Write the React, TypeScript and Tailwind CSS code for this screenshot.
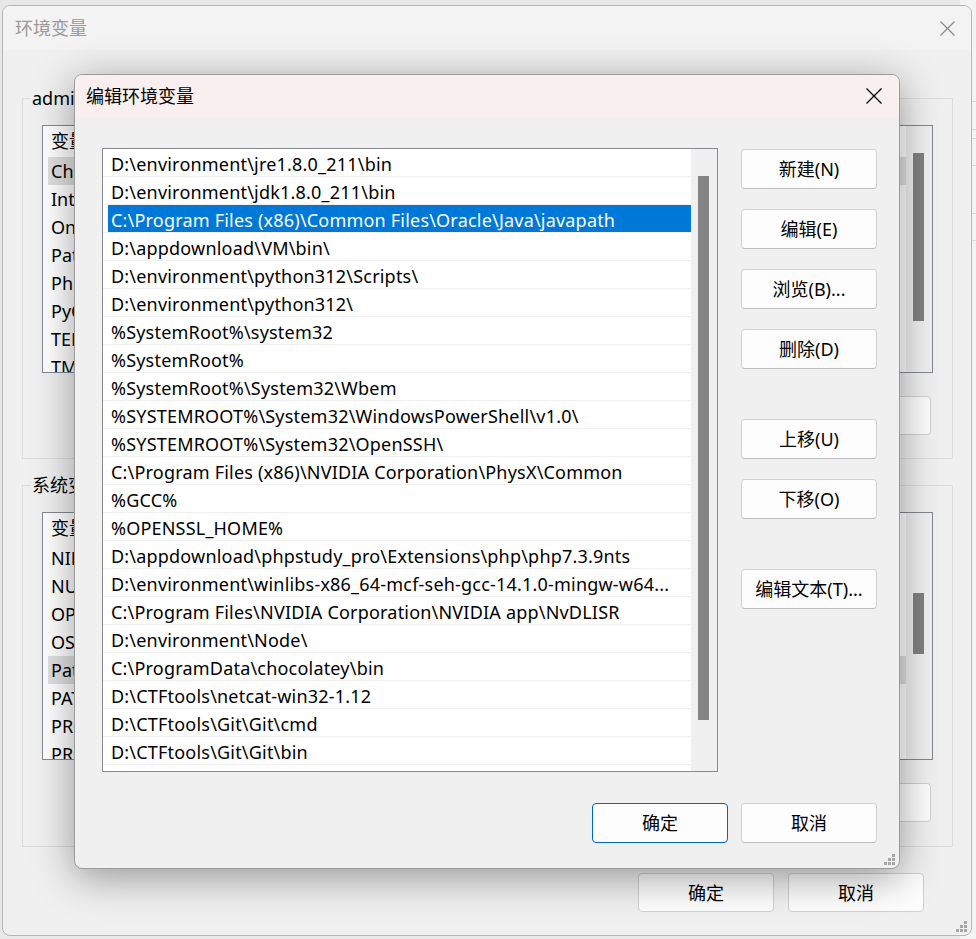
import type { ReactNode } from 'react';

const paths = [
  'D:\\environment\\jre1.8.0_211\\bin',
  'D:\\environment\\jdk1.8.0_211\\bin',
  'C:\\Program Files (x86)\\Common Files\\Oracle\\Java\\javapath',
  'D:\\appdownload\\VM\\bin\\',
  'D:\\environment\\python312\\Scripts\\',
  'D:\\environment\\python312\\',
  '%SystemRoot%\\system32',
  '%SystemRoot%',
  '%SystemRoot%\\System32\\Wbem',
  '%SYSTEMROOT%\\System32\\WindowsPowerShell\\v1.0\\',
  '%SYSTEMROOT%\\System32\\OpenSSH\\',
  'C:\\Program Files (x86)\\NVIDIA Corporation\\PhysX\\Common',
  '%GCC%',
  '%OPENSSL_HOME%',
  'D:\\appdownload\\phpstudy_pro\\Extensions\\php\\php7.3.9nts',
  'D:\\environment\\winlibs-x86_64-mcf-seh-gcc-14.1.0-mingw-w64...',
  'C:\\Program Files\\NVIDIA Corporation\\NVIDIA app\\NvDLISR',
  'D:\\environment\\Node\\',
  'C:\\ProgramData\\chocolatey\\bin',
  'D:\\CTFtools\\netcat-win32-1.12',
  'D:\\CTFtools\\Git\\Git\\cmd',
  'D:\\CTFtools\\Git\\Git\\bin',
  '',
];

const userVars = ['ChocolateyLastPathUpdate', 'IntelliJ IDEA', 'OneDrive', 'Path', 'PhpStorm', 'PyCharm', 'TEMP', 'TMP'];
const sysVars = ['NIKTO_HOME', 'NUMBER_OF_PROCESSORS', 'OPENSSL_HOME', 'OS', 'Path', 'PATHEXT', 'PROCESSOR_ARCHITECTURE', 'PROCESSOR_IDENTIFIER'];

function CloseIcon({ className }: { className: string }) {
  return (
    <svg viewBox="0 0 16 16" className={className} fill="none" stroke="currentColor" strokeWidth={1.3}>
      <path d="M0.5 0.5 15.5 15.5M15.5 0.5 0.5 15.5" />
    </svg>
  );
}

// size grip in the lower right corner of a resizable window
function Grip() {
  return (
    <svg width="12" height="12" viewBox="0 0 12 12" className="absolute bottom-[2px] right-[3px]" fill="#a6a6a6">
      <rect x="8" y="0" width="3" height="3" />
      <rect x="4" y="4" width="3" height="3" />
      <rect x="8" y="4" width="3" height="3" />
      <rect x="0" y="8" width="3" height="3" />
      <rect x="4" y="8" width="3" height="3" />
      <rect x="8" y="8" width="3" height="3" />
    </svg>
  );
}

function WinButton({ children, className = '' }: { children: ReactNode; className?: string }) {
  return (
    <button
      className={`flex h-10 w-[136px] shrink-0 items-center justify-center rounded-[4px] border bg-[#fdfdfd] text-[18px] leading-none text-black ${className}`}
    >
      {children}
    </button>
  );
}

function VarList({ items, selected, thumb }: { items: string[]; selected: number; thumb: string }) {
  return (
    <div className="flex h-[248px] border border-[#828790] bg-white">
      <div className="flex-1 overflow-hidden pl-[5px]">
        <div className="h-[31px] pl-[3px] leading-[31px]">变量</div>
        {items.map((name, i) => (
          <div
            key={name}
            className={`h-[28px] whitespace-nowrap pl-[3px] leading-[28px] ${i === selected ? 'bg-[#e0e0e0]' : ''}`}
          >
            {name}
          </div>
        ))}
      </div>
      <div className="relative w-[26px] bg-[#f0f0f0]">
        <div className={`absolute left-[7px] w-[11px] bg-[#808080] ${thumb}`} />
      </div>
    </div>
  );
}

export default function App() {
  return (
    <div className="relative h-[939px] w-[976px] overflow-hidden bg-[#e8e8e8] font-['Noto_Sans','Noto_Sans_CJK_SC',sans-serif] text-[18px] text-black">
      {/* window peeking out behind on the right */}
      <div className="absolute left-[960px] top-0 h-full w-[16px] bg-[#f3f3f3]">
        <div className="mt-[101px] border-t border-[#dadada]" />
        <div className="mt-[27px] border-t border-[#dadada]" />
        <div className="mt-[8px] border-t border-[#dadada]" />
        <div className="mt-[26px] border-t border-[#dadada]" />
        <div className="mt-[47px] border-t border-[#dadada]" />
        <div className="mt-[26px] border-t border-[#dadada]" />
      </div>

      {/* 环境变量 */}
      <div className="absolute left-[2px] top-[5px] flex h-[931px] w-[970px] flex-col overflow-hidden rounded-[8px] border border-[#b5b5b5] bg-[#f0f0f0]">
        <div className="flex h-[44px] shrink-0 items-center justify-between bg-[#f3f3f3] pl-[12px]">
          <span className="text-[#9a9a9a]">环境变量</span>
          <CloseIcon className="mr-[16px] h-[15px] w-[15px] text-[#8a8a8a]" />
        </div>

        <div className="flex flex-1 flex-col pl-[19px] pr-[18px]">
          <div className="relative mt-[48px] h-[361px] border border-[#dcdcdc] px-[19px] pt-[26px]">
            <span className="absolute left-[8px] top-[-13px] bg-[#f0f0f0] px-px leading-[24px]">administrator 的用户变量(U)</span>
            <VarList items={userVars} selected={0} thumb="top-[27px] h-[168px]" />
            <div className="mt-[23px] flex justify-end gap-[14px] pr-[2px]">
              <WinButton className="h-[39px] w-[135px] border-[#d0d0d0]">新建(N)...</WinButton>
              <WinButton className="h-[39px] w-[135px] border-[#d0d0d0]">编辑(E)...</WinButton>
              <WinButton className="h-[39px] w-[135px] border-[#d0d0d0]">删除(D)</WinButton>
            </div>
          </div>

          <div className="relative mt-[26px] h-[362px] border border-[#dcdcdc] px-[19px] pt-[26px]">
            <span className="absolute left-[8px] top-[-13px] bg-[#f0f0f0] px-px leading-[24px]">系统变量(S)</span>
            <VarList items={sysVars} selected={4} thumb="top-[80px] h-[61px]" />
            <div className="mt-[23px] flex justify-end gap-[14px] pr-[2px]">
              <WinButton className="h-[39px] w-[135px] border-[#d0d0d0]">新建(W)...</WinButton>
              <WinButton className="h-[39px] w-[135px] border-[#d0d0d0]">编辑(I)...</WinButton>
              <WinButton className="h-[39px] w-[135px] border-[#d0d0d0]">删除(L)</WinButton>
            </div>
          </div>

          <div className="mt-[26px] flex justify-end gap-[14px] pr-[29px]">
            <WinButton className="h-[39px] w-[135px] border-[#d0d0d0]">确定</WinButton>
            <WinButton className="h-[39px] w-[135px] border-[#d0d0d0]">取消</WinButton>
          </div>
        </div>
        <Grip />
      </div>

      {/* 编辑环境变量 */}
      <div className="absolute left-[74px] top-[74px] flex h-[795px] w-[826px] flex-col overflow-hidden rounded-[8px] border border-[#9c9c9c] bg-[#f0f0f0] shadow-[0_8px_40px_rgba(0,0,0,0.38)]">
        <div className="flex h-[42px] shrink-0 items-center justify-between bg-[#f9efee] pl-[11px]">
          <span>编辑环境变量</span>
          <CloseIcon className="mr-[17px] h-4 w-4 text-black" />
        </div>

        <div className="flex flex-1 flex-col pl-[27px] pr-[22px] pt-[31px]">
          <div className="flex">
            <div className="flex h-[624px] w-[616px] shrink-0 border border-[#878a90] bg-white">
              <div className="flex-1 overflow-hidden">
                {paths.map((p, i) => (
                  <div key={i} className="h-[28px] border-b border-[#f0f0f0]">
                    <div
                      className={`ml-[5px] h-[27px] whitespace-nowrap pl-[3px] pt-[4px] leading-[23px] tracking-[0.2px] ${i === 2 ? 'bg-[#0078d7] text-white' : ''}`}
                    >
                      {p}
                    </div>
                  </div>
                ))}
              </div>
              <div className="relative w-[26px] bg-[#f0f0f0]">
                <div className="absolute left-[7px] top-[27px] h-[544px] w-[11px] bg-[#858585]" />
              </div>
            </div>

            <div className="ml-[23px] flex flex-col pt-px">
              <WinButton className="border-[#d3d3d3] border-b-[#bdbdbd]">新建(N)</WinButton>
              <WinButton className="mt-5 border-[#d3d3d3] border-b-[#bdbdbd]">编辑(E)</WinButton>
              <WinButton className="mt-5 border-[#d3d3d3] border-b-[#bdbdbd]">浏览(B)...</WinButton>
              <WinButton className="mt-5 border-[#d3d3d3] border-b-[#bdbdbd]">删除(D)</WinButton>
              <WinButton className="mt-[50px] border-[#d3d3d3] border-b-[#bdbdbd]">上移(U)</WinButton>
              <WinButton className="mt-5 border-[#d3d3d3] border-b-[#bdbdbd]">下移(O)</WinButton>
              <WinButton className="mt-[50px] border-[#d3d3d3] border-b-[#bdbdbd]">编辑文本(T)...</WinButton>
            </div>
          </div>

          <div className="mt-[31px] flex justify-end gap-[13px]">
            <WinButton className="border-[#0067c0]">确定</WinButton>
            <WinButton className="border-[#d3d3d3] border-b-[#bdbdbd]">取消</WinButton>
          </div>
        </div>
        <Grip />
      </div>
    </div>
  );
}
